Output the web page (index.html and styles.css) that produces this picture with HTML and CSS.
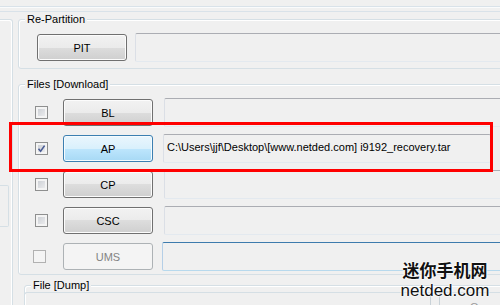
FILE: index.html
```html
<!DOCTYPE html>
<html>
<head>
<meta charset="utf-8">
<link rel="stylesheet" href="styles.css">
</head>
<body>
<div class="screen">
  <div class="topbar">
    <div class="tline"></div>
    <div class="tline t2"></div>
  </div>
  <div class="main">
    <div class="leftcol">
      <div class="lgroup">
        <div class="lbox"></div>
      </div>
    </div>
    <div class="rightcol">
      <fieldset class="group repart">
        <legend>Re-Partition</legend>
        <div class="row pitrow">
          <div class="btn">PIT</div>
          <div class="field"></div>
        </div>
      </fieldset>
      <fieldset class="group files">
        <legend>Files [Download]</legend>
        <div class="rows">
          <div class="row">
            <span class="chk"></span>
            <div class="btn">BL</div>
            <div class="field"></div>
          </div>
          <div class="row">
            <span class="chk checked">
              <svg viewBox="0 0 13 13" width="13" height="13"><path d="M3.5 6.8 L5.6 9.2 L9.6 3.6" fill="none" stroke="#4a5c94" stroke-width="1.6"/></svg>
            </span>
            <div class="btn hot">AP</div>
            <div class="field short">C:\Users\jjf\Desktop\[www.netded.com] i9192_recovery.tar</div>
          </div>
          <div class="row">
            <span class="chk"></span>
            <div class="btn">CP</div>
            <div class="field"></div>
          </div>
          <div class="row">
            <span class="chk"></span>
            <div class="btn">CSC</div>
            <div class="field"></div>
          </div>
          <div class="row">
            <span class="chk disabled"></span>
            <div class="btn off">UMS</div>
            <div class="field blue"></div>
          </div>
        </div>
      </fieldset>
      <fieldset class="group dump">
        <legend>File [Dump]</legend>
        <div class="dumpbox">
          <div class="dumpfield"></div>
          <div class="dumpsep"></div>
          <div class="openbtn">Open</div>
        </div>
      </fieldset>
    </div>
  </div>
  <div class="redbox"></div>
  <div class="watermark">
    <div class="wm-cn">迷你手机网</div>
    <div class="wm-en">netded.com</div>
  </div>
</div>
</body>
</html>
```
FILE: styles.css
```css
html, body {
  margin: 0;
  padding: 0;
  background: #f0f0f0;
}
.screen {
  position: relative;
  width: 500px;
  height: 305px;
  overflow: hidden;
  background: #f0f0f0;
  font-family: "Liberation Sans", Arial, sans-serif;
  font-size: 11px;
  color: #000;
}
.topbar {
  padding-top: 6px;
  height: 6px;
}
.tline {
  height: 0;
  border-top: 1px solid #d9e2e9;
  border-bottom: 1px solid #fafbfc;
}
.tline.t2 {
  margin-top: 3px;
  border-bottom: none;
}
.main {
  display: flex;
  gap: 5px;
}
.leftcol {
  width: 13px;
  flex: none;
}
.lgroup {
  margin-top: 7px;
  height: 320px;
  border: 1px solid #d5dfe5;
  border-left: none;
  border-radius: 0 3px 3px 0;
  box-shadow: inset -1px 1px 0 #fff;
}
.lbox {
  margin-top: 165px;
  height: 40px;
  width: 8px;
  border: 1px solid #d5dfe5;
  border-left: none;
  border-radius: 0 2px 2px 0;
  background: #f0f0f0;
}
.rightcol {
  width: 520px;
  flex: none;
}
.group {
  margin: 0;
  padding: 0;
  border: 1px solid #d5dfe5;
  border-radius: 3px;
  box-shadow: inset 1px 1px 0 #fff;
  min-width: 0;
}
.group legend {
  margin-left: 6px;
  padding: 0 2px;
  line-height: 14px;
  background: #f0f0f0;
  color: #000;
}
.row {
  display: flex;
  align-items: center;
  height: 29px;
}
.pitrow {
  margin: 7px 0 6px 18px;
}
.pitrow .field {
  margin-left: 8px;
}
.files {
  margin-top: 8px;
}
.rows {
  display: flex;
  flex-direction: column;
  gap: 7px;
  padding: 7px 0 3px 16px;
}
.btn {
  box-sizing: border-box;
  width: 90px;
  height: 27px;
  flex: none;
  border: 1px solid #707070;
  border-radius: 3px;
  background: linear-gradient(#f2f2f2 0%, #ebebeb 50%, #dddddd 50%, #cfcfcf 100%);
  box-shadow: inset 0 0 0 1px #fcfcfc;
  display: flex;
  align-items: center;
  justify-content: center;
  color: #000;
}
.btn.hot {
  border-color: #3c7fb1;
  background: linear-gradient(#eaf6fd 0%, #d9f0fc 50%, #bee6fd 50%, #a7d9f5 100%);
  box-shadow: inset 0 0 0 1px #f5fbfe;
}
.btn.off {
  border-color: #adb2b5;
  background: #f4f4f4;
  box-shadow: none;
  color: #838383;
}
.chk {
  box-sizing: border-box;
  width: 13px;
  height: 13px;
  flex: none;
  margin-right: 15px;
  border: 1px solid #8e8f8f;
  background: linear-gradient(135deg, #c6cad0 0%, #f2f2f3 100%);
  box-shadow: inset 0 0 0 2px #f4f4f4;
  position: relative;
}
.chk svg {
  position: absolute;
  left: -1px;
  top: -1px;
}
.chk.disabled {
  margin-left: -2px;
  margin-right: 17px;
  width: 13px;
  border-color: #b1b1b1;
  background: #f4f4f4;
  box-shadow: none;
}
.field {
  box-sizing: border-box;
  flex: 1;
  height: 29px;
  margin-left: 11px;
  border: 1px solid;
  border-color: #abadb3 #e2e3ea #e3e9ef #dbdfe6;
  border-radius: 2px;
  background: #f0f0f0;
  padding: 6px 0 0 3px;
  white-space: nowrap;
  overflow: hidden;
}
.field.short {
  flex: none;
  width: 328px;
  margin-left: 10px;
}
.field.blue {
  margin-left: 9px;
  border-color: #3d7bad #a4c9e3 #b7d9ed #b5cfe7;
}
.dump {
  margin-top: 3px;
  margin-left: 6px;
  height: 60px;
}
.dumpbox {
  position: relative;
  margin: 0 0 0 -1px;
  height: 40px;
  border-top: 1px solid #d5dfe5;
  border-left: 1px solid #d5dfe5;
  border-radius: 3px 0 0 0;
  display: flex;
}
.dumpfield {
  width: 405px;
  flex: none;
  border-right: 1px solid #c9d2d8;
}
.dumpsep {
  width: 8px;
  flex: none;
  border-right: 1px solid #c9d2d8;
}
.openbtn {
  margin-left: 30px;
  padding-top: 8px;
  line-height: 13px;
  color: #9a9a9a;
}
.redbox {
  position: absolute;
  left: 9px;
  top: 122px;
  width: 478px;
  height: 44px;
  border: 3px solid #ff0000;
}
.watermark {
  position: absolute;
  left: 400px;
  top: 259px;
  width: 90px;
  text-align: center;
  color: #111;
  text-shadow: 0 0 2px #fff, 0 0 2px #fff, 0 0 2px #fff;
}
.wm-cn {
  font-family: "Noto Sans CJK SC", sans-serif;
  font-size: 17px;
  font-weight: 600;
  line-height: 22px;
}
.wm-en {
  font-family: "Liberation Sans", Arial, sans-serif;
  font-size: 17px;
  line-height: 19px;
}
```
